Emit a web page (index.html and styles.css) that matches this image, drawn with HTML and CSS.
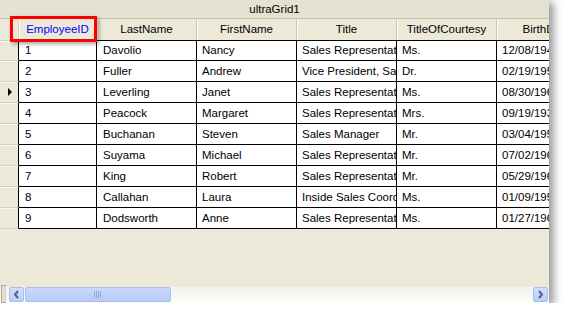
FILE: index.html
```html
<!DOCTYPE html>
<html>
<head>
<meta charset="utf-8">
<link rel="stylesheet" href="styles.css">
</head>
<body>
<div class="window">
  <div class="caption">ultraGrid1</div>
  <div class="grid">
    <div class="row head">
      <div class="sel"></div>
      <div class="hc c1 active">EmployeeID</div>
      <div class="hc c2">LastName</div>
      <div class="hc c3">FirstName</div>
      <div class="hc c3">Title</div>
      <div class="hc c3">TitleOfCourtesy</div>
      <div class="hc c3">BirthDate</div>
    </div>
    <div class="row"><div class="sel"></div><div class="dc c1">1</div><div class="dc c2">Davolio</div><div class="dc c3">Nancy</div><div class="dc c3">Sales Representative</div><div class="dc c3">Ms.</div><div class="dc c3">12/08/1948</div></div>
    <div class="row"><div class="sel"></div><div class="dc c1">2</div><div class="dc c2">Fuller</div><div class="dc c3">Andrew</div><div class="dc c3">Vice President, Sales</div><div class="dc c3">Dr.</div><div class="dc c3">02/19/1952</div></div>
    <div class="row"><div class="sel"><span class="arrow"></span></div><div class="dc c1">3</div><div class="dc c2">Leverling</div><div class="dc c3">Janet</div><div class="dc c3">Sales Representative</div><div class="dc c3">Ms.</div><div class="dc c3">08/30/1963</div></div>
    <div class="row"><div class="sel"></div><div class="dc c1">4</div><div class="dc c2">Peacock</div><div class="dc c3">Margaret</div><div class="dc c3">Sales Representative</div><div class="dc c3">Mrs.</div><div class="dc c3">09/19/1937</div></div>
    <div class="row"><div class="sel"></div><div class="dc c1">5</div><div class="dc c2">Buchanan</div><div class="dc c3">Steven</div><div class="dc c3">Sales Manager</div><div class="dc c3">Mr.</div><div class="dc c3">03/04/1955</div></div>
    <div class="row"><div class="sel"></div><div class="dc c1">6</div><div class="dc c2">Suyama</div><div class="dc c3">Michael</div><div class="dc c3">Sales Representative</div><div class="dc c3">Mr.</div><div class="dc c3">07/02/1963</div></div>
    <div class="row"><div class="sel"></div><div class="dc c1">7</div><div class="dc c2">King</div><div class="dc c3">Robert</div><div class="dc c3">Sales Representative</div><div class="dc c3">Mr.</div><div class="dc c3">05/29/1960</div></div>
    <div class="row"><div class="sel"></div><div class="dc c1">8</div><div class="dc c2">Callahan</div><div class="dc c3">Laura</div><div class="dc c3">Inside Sales Coordinator</div><div class="dc c3">Ms.</div><div class="dc c3">01/09/1958</div></div>
    <div class="row"><div class="sel"></div><div class="dc c1">9</div><div class="dc c2">Dodsworth</div><div class="dc c3">Anne</div><div class="dc c3">Sales Representative</div><div class="dc c3">Ms.</div><div class="dc c3">01/27/1966</div></div>
  </div>
  <div class="spacer"></div>
  <div class="hscroll">
    <div class="grip"></div>
    <div class="btn left"><svg width="15" height="15" viewBox="0 0 15 15"><path d="M9 4 L6 7.5 L9 11" fill="none" stroke="#4d6185" stroke-width="2"/></svg></div>
    <div class="thumb"><svg width="8" height="7" viewBox="0 0 8 7"><path d="M0.5 0 V7 M2.5 0 V7 M4.5 0 V7 M6.5 0 V7" stroke="#8fa8e0" stroke-width="1"/></svg></div>
    <div class="track"></div>
    <div class="btn right"><svg width="15" height="15" viewBox="0 0 15 15"><path d="M6 4 L9 7.5 L6 11" fill="none" stroke="#4d6185" stroke-width="2"/></svg></div>
  </div>
  <div class="highlight"></div>
</div>
</body>
</html>
```
FILE: styles.css
```css
html, body {
  margin: 0;
  padding: 0;
  background: #ffffff;
}
body {
  font-family: "Liberation Sans", Arial, sans-serif;
  font-size: 11.5px;
  color: #000;
}
.window {
  position: relative;
  width: 549px;
  height: 303px;
  background: #ece9d8;
  display: flex;
  flex-direction: column;
  box-shadow: 3px 3px 9px 1px rgba(0,0,0,0.45);
}
.caption {
  height: 18px;
  line-height: 18px;
  text-align: center;
  background: #e6e2d2;
  border-bottom: 1px solid #c4c1b0;
  flex: none;
}
.grid {
  flex: none;
  overflow: hidden;
  width: 549px;
}
.row {
  display: flex;
  height: 21px;
  white-space: nowrap;
}
.row > div {
  flex: none;
  box-sizing: border-box;
  overflow: hidden;
}
.sel {
  width: 19px;
  height: 21px;
  border-right: 1px solid #000;
  border-bottom: 1px solid #d6d2c2;
  box-shadow: inset 0 1px 0 #f8f7f1;
  position: relative;
}
.head .sel {
  border-right: 1px solid #d6d2c2;
  border-bottom: none;
  box-shadow: none;
}
.arrow {
  position: absolute;
  left: 8px;
  top: 6px;
  width: 0;
  height: 0;
  border-top: 4px solid transparent;
  border-bottom: 4px solid transparent;
  border-left: 4px solid #000;
}
.c1 { width: 78px; }
.c2 { width: 100px; }
.c3 { width: 100px; }
.hc {
  height: 21px;
  line-height: 21px;
  text-align: center;
  border-right: 1px solid #cbc7b8;
  box-shadow: inset 1px 0 0 #ffffff;
}
.hc.active {
  color: #0000ff;
}
.dc {
  height: 21px;
  line-height: 20px;
  background: #fff;
  border-right: 1px solid #000;
  border-bottom: 1px solid #000;
  padding-left: 6px;
}
.dc.c3 { padding-left: 5px; }
.row:nth-child(2) .dc { border-top: 1px solid #000; line-height: 19px; }
.row:nth-child(2) .sel { border-top: 1px solid #d6d2c2; }
.spacer {
  flex: 1;
}
.hscroll {
  flex: none;
  height: 16px;
  display: flex;
  align-items: stretch;
  background: linear-gradient(#f3f1ec, #fefefd);
  position: relative;
}
.grip {
  width: 5px;
  margin: -2px 3px 0 1px;
  background: #e4e1d3;
  border: 1px solid #aaa797;
  border-right-color: #d0cdbd;
  box-sizing: border-box;
}
.btn {
  width: 15px;
  height: 15px;
  flex: none;
  background: linear-gradient(#d2defc, #b9cdf8);
  border: 1px solid #a9bdee;
  border-radius: 2px;
  box-sizing: border-box;
  display: flex;
  align-items: center;
  justify-content: center;
}
.btn svg { flex: none; }
.btn.left { margin-right: 1px; }
.btn.right { margin-right: 1px; }
.thumb {
  width: 146px;
  height: 15px;
  flex: none;
  background: linear-gradient(#cad9fb, #b8cbf7);
  border: 1px solid #a9bdee;
  border-radius: 2px;
  box-sizing: border-box;
  display: flex;
  align-items: center;
  justify-content: center;
}
.track {
  flex: 1;
}
.highlight {
  position: absolute;
  left: 10px;
  top: 16px;
  width: 87px;
  height: 26px;
  border: 3px solid #ff0000;
  box-sizing: border-box;
  box-shadow: 2px 2px 4px rgba(0,0,0,0.35);
}
```
